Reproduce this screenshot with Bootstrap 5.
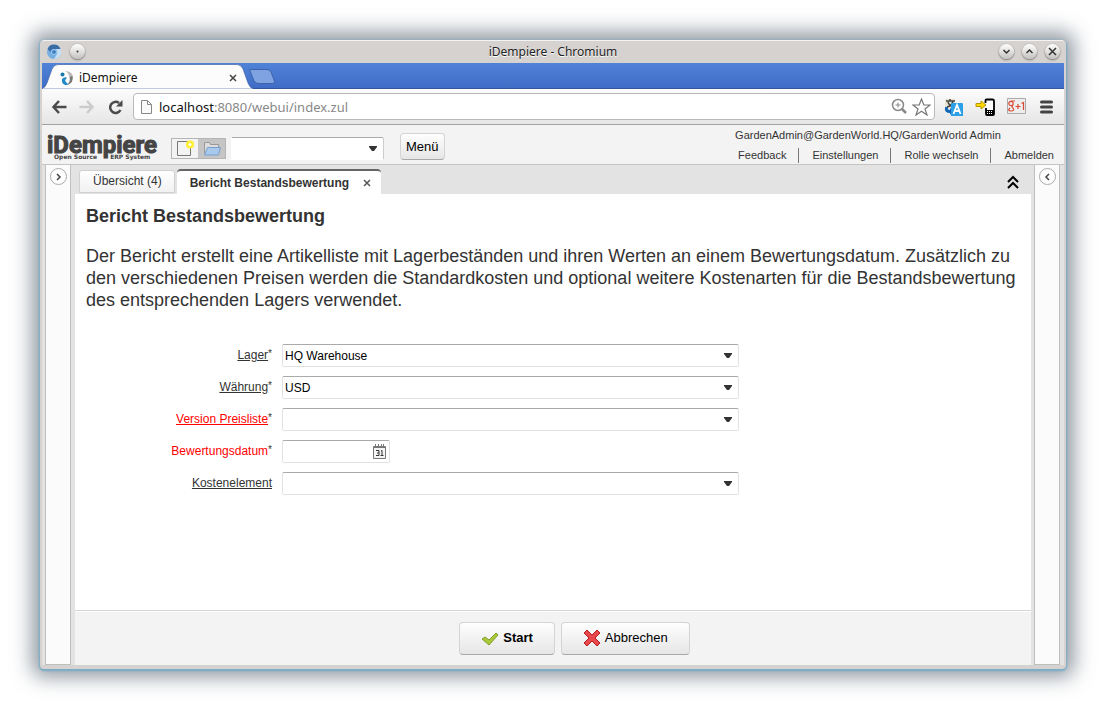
<!DOCTYPE html>
<html lang="de">
<head>
<meta charset="utf-8">
<meta name="viewport" content="width=device-width, initial-scale=1">
<title>iDempiere</title>
<link href="https://cdn.jsdelivr.net/npm/bootstrap@5.3.0/dist/css/bootstrap.min.css" rel="stylesheet">
<style>
body{background:#fff;font-family:"Liberation Sans",Arial,sans-serif;font-size:12px;line-height:16px;color:#333}
button{border:0;background:none;padding:0;color:inherit}
svg{display:block;flex:none}
.desk{min-height:100vh;padding:40px}
.win{background:#d6d2cf;border:solid #d6d2cf;border-width:0 2px 4px;border-radius:4px;
 box-shadow:inset 0 1px #f4f4f4,0 1px 2px 1px #78adc8,0 0 20px 8px rgba(70,85,100,.6)}
.chrome{font-family:"Noto Sans","Open Sans",sans-serif;color:#222}
.titlebar{height:23px;padding:0 4px;display:grid;grid-template-columns:1fr auto 1fr;align-items:center}
.titlebar .caption{font-size:12px;text-shadow:0 1px #fff}
.ball{width:15px;height:15px;border-radius:50%;background:linear-gradient(#fff,#c4c2c0);box-shadow:0 1px 2px #777,0 0 1px #999}
.tabstrip{height:26px;background:linear-gradient(#5083d8,#406cc6);border-bottom:1px solid #34589e}
.btab{width:211px;height:26px;color:#111}
.btab .shape{position:absolute;left:0;top:0}
.btab .inner{position:relative;height:26px;padding:3px 16px 0 18px}
.btab .inner span{padding-left:5px}
.newtab svg{overflow:visible}
.toolbar{height:36px;background:linear-gradient(#fcfcfc,#e6e6e6);border-bottom:1px solid #a3a3a3;padding:0 10px 0 9px}
.omni{height:27px;border:1px solid #b9b9b9;border-radius:4px;background:#fff;padding:0 3px 0 6px;margin:0 9px 0 10px}
.omni .url{font-size:13px;line-height:20px;color:#888;padding-left:6px}
.omni .url b{font-weight:400;color:#111}
.exts{gap:12px}
.apphead{height:40px;background:#f3f3f3;border-bottom:1px solid #c4c4c4;padding:0 10px 0 5px}
.brand{width:124px;color:#444;padding-top:4px}
.brand .name{font:bold 24px/24px Roboto,sans-serif;-webkit-text-stroke:1px #444}
.brand .tagline{font:bold 6px/8px "DejaVu Sans",sans-serif;padding-left:7px;margin-top:-4px;display:flex;gap:13px}
.tools{border:1px solid #b5b5b5;height:21px}
.tools button{width:26px;height:19px;display:flex;align-items:center;justify-content:center}
.tools button+button{width:27px;background:#c5c5c5}
.field{height:23px;width:100%;border:1px solid #e1e1e1;border-top-color:#aaa;border-radius:2px;background:#fff;color:#000;font-size:12px;line-height:16px;padding:2px}
select.field{appearance:none;padding-right:20px;background:#fff url("data:image/svg+xml,%3Csvg xmlns='http://www.w3.org/2000/svg' width='10' height='5'%3E%3Cpath d='M1 0h8v1L6 5H4L1 1z' fill='%23333'/%3E%3C/svg%3E") no-repeat right 5px center}
select.search{width:153px;border-color:#aaa #ccc #fff #fff;margin-left:5px}
.menubtn{height:27px;padding:0 5px}
.zbtn{border:1px solid #d4d4d4;border-bottom-color:#a8a8a8;border-radius:4px;background:linear-gradient(#fefefe,#e6e6e6);color:#000;font-size:13px}
.user{font-size:11px;line-height:16px}
.user nav{margin-top:5px}
.user a{color:#333;text-decoration:none;padding:0 12px 0 13px;border-left:1px solid #777;line-height:15px}
.user a:first-child{border:0;padding-left:3px}
.user a:last-child{padding-right:0}
.appbody{background:#e3e3e3;padding:0 4px 0 3px}
.side{width:26px;flex:none;background:#fbfbfb;border:solid #bfbfbf;border-width:0 1px 1px;padding-top:3px}
.side button{width:17px;height:17px;border:1px solid #aaa;border-radius:50%;display:flex;align-items:center;justify-content:center;background:#fff}
.work{min-width:0;margin:0 3px 0 4px}
.wtabs{height:29px;padding:4px 11px 0 4px;gap:2px}
.wtab{height:23px;border:1px solid #d0d0d0;border-radius:3px 3px 0 0;background:linear-gradient(#fff,#f1f1f1);padding:0 12px 2px 13px;margin-top:1px}
.wtab.on{height:25px;margin-top:0;border:0;border-top:2px solid #666;border-radius:4px 4px 0 0;background:#fff;font-weight:700;padding:0 10px 0 13px}
.wtab.on button{padding-left:14px}
.page{background:#fff;padding:11px 11px 12px}
.page h1{font-size:18px;line-height:22px;font-weight:700;margin:0 0 18px}
.page p{font-size:18px;line-height:22px;margin:0 0 33px}
.fields{display:grid;row-gap:9px}
.frow{display:grid;grid-template-columns:186px minmax(0,457px);column-gap:10px;align-items:center}
.frow label{text-align:right;padding-bottom:1px}
.frow.need label{color:red}
.frow sup{font-size:10px;line-height:0;color:#333;top:-2px}
.date{width:108px}
.date button{position:absolute;right:4px;top:3px}
.actions{height:55px;border-top:1px solid #d5d5d5;box-shadow:inset 0 1px #fff;background:#f3f3f3;padding:0 0 0 43px;gap:6px}
.actions .zbtn{height:33px;padding:0 21px}
</style>
</head>
<body>
<div class="desk d-flex flex-column">
<div class="win d-flex flex-column flex-grow-1">
 <header class="chrome">
  <div class="titlebar">
   <div class="d-flex align-items-center">
    <svg width="16" height="16" viewBox="0 0 16 16"><circle cx="8" cy="8" r="7" fill="#75aee0"/><path d="M1.500 5A7 7 0 0 1 14.500 5H8Q5 5 4.500 8z" fill="#3a6da6"/><path d="M14.500 5A7 7 0 0 1 8 15l3-5q1-3-1-5z" fill="#c5dff5"/><circle cx="8" cy="8" r="2.500" fill="#3f7fc4" stroke="#a5cdf0"/></svg>
    <button class="ball ms-2 d-flex align-items-center justify-content-center" aria-label="Fenstermenü"><svg width="3" height="3"><circle cx="1.500" cy="1.500" r="1" fill="#333"/></svg></button>
   </div>
   <div class="caption">iDempiere - Chromium</div>
   <div class="d-flex justify-content-end gap-2">
    <button class="ball" aria-label="Minimieren"><svg width="15" height="15" fill="none" stroke="#333" stroke-width="1.500"><path d="M4.500 6l3 3 3-3"/></svg></button>
    <button class="ball" aria-label="Maximieren"><svg width="15" height="15" fill="none" stroke="#333" stroke-width="1.500"><path d="M4.500 9l3-3 3 3"/></svg></button>
    <button class="ball" aria-label="Schließen"><svg width="15" height="15" fill="none" stroke="#333" stroke-width="1.500"><path d="M4 4l7 7m0-7l-7 7"/></svg></button>
   </div>
  </div>
  <div class="tabstrip d-flex">
   <div class="btab position-relative">
    <svg class="shape" width="211" height="26" viewBox="0 0 211 26"><path d="M0 25.500Q3 25 5 20L10 6Q12 1.500 16 1.500H195Q199 1.500 201 6L206 20Q208 25 211 25.500V26H0z" fill="#fcfcfc" stroke="#34589e" stroke-opacity=".6"/></svg>
    <div class="inner d-flex align-items-center">
     <svg width="14" height="16" viewBox="0 0 14 16"><circle cx="2.500" cy="4.500" r="2" fill="#1878ae"/><path d="M5 1Q8 2 9.500 7L12 9Q15 2 5 1z" fill="#bbb"/><path d="M12.500 6Q14 13 7 15Q11 11 9.500 7z" fill="#777"/><path d="M2 9q3-3 5-1-3 2-1 4 1 2 3 2Q4 17 2 12z" fill="#2088c5"/></svg>
     <span class="flex-grow-1">iDempiere</span>
     <button aria-label="Tab schließen"><svg width="8" height="8" stroke="#444" stroke-width="1.500"><path d="M1 1l6 6m0-6L1 7"/></svg></button>
    </div>
   </div>
   <button class="newtab" aria-label="Neuer Tab"><svg width="26" height="26"><path d="M-3.500 6.500H14Q17 6.500 18 9L21.500 18Q22 20.500 19.500 20.500H6Q3 20.500 1 18z" fill="#7fa3e0" stroke="#3c63ac"/></svg></button>
  </div>
  <div class="toolbar d-flex align-items-center">
   <button aria-label="Zurück"><svg width="16" height="16" fill="none" stroke="#4a4a4a" stroke-width="2.500"><path d="M8 2L2.500 8 8 14M3 8h12.500"/></svg></button>
   <button class="ms-2 ps-1" aria-label="Vorwärts"><svg width="16" height="16" fill="none" stroke="#ccc" stroke-width="2.500"><path d="M8 2l5.500 6L8 14M13 8H.500"/></svg></button>
   <button class="ms-2 ps-1" aria-label="Neu laden"><svg width="16" height="16" fill="none" stroke="#4a4a4a" stroke-width="2.500"><path d="M13.500 11A5.500 5.500 0 1 1 12 4"/><path d="M15.500 1v6.500H9z" fill="#4a4a4a" stroke="none"/></svg></button>
   <div class="omni d-flex align-items-center flex-grow-1">
    <svg width="13" height="16" fill="#fafafa" stroke="#888"><path d="M1.500 1.500h6l4 4v9h-10zM7.500 1.500v4h4"/></svg>
    <span class="url flex-grow-1"><b>localhost</b>:8080/webui/index.zul</span>
    <button aria-label="Zoom"><svg width="17" height="17" fill="none" stroke="#888" stroke-width="1.500"><circle cx="7" cy="7" r="5.500"/><path d="M11 11l4 4" stroke-width="2.500"/><path d="M4.500 7h5M7 4.500v5" stroke-width="1"/></svg></button>
    <button class="ms-1" aria-label="Lesezeichen"><svg width="19" height="18" fill="#fff" stroke="#777" stroke-width="1.200"><path d="M9.500 1l2.300 6H18l-5 4 2 6-5.500-3.700L4 17l2-6-5-4h6.200z"/></svg></button>
   </div>
   <div class="exts d-flex align-items-center">
    <button aria-label="Übersetzen"><svg width="19" height="18" viewBox="0 0 19 18"><path d="M1 1h10v10H1z" fill="#e7e1cf"/><path d="M2 3h9M6 1v2M3 9Q8 8 9 3M4 4q1 4 6 5" fill="none" stroke="#444" stroke-width="1.500"/><path d="M1 9q-1 6 5 6v2l3-4-3-3v2Q3 12 4 9z" fill="#1266b7"/><path d="M7 5h11q1 0 1 1v12H7z" fill="#2ba0e8"/><path d="M9.500 16L13 7l3.500 9M11 13h4" stroke="#fff" stroke-width="1.800" fill="none"/></svg></button>
    <button aria-label="An Telefon senden"><svg width="20" height="18" viewBox="0 0 20 18"><path d="M10.500 5V2.500q0-1 1-1h6q1.500 0 1.500 1.500v13q0 1-1 1h-6q-1 0-1-1V10" fill="#fff" stroke="#000" stroke-width="1.800"/><path d="M11 12h8v5h-8z"/><path d="M12 13.500h1m1 0h1m1 0h1m-5 2h1m1 0h1m1 0h1" stroke="#fff"/><path d="M1 5.500h5V3l5 4-5 4V8.500H1z" fill="#ffd900" stroke="#b79700"/></svg></button>
    <button aria-label="Google +1"><svg width="20" height="17" viewBox="0 0 20 17"><path d="M.5.5h18v15H.5z" fill="#eee" stroke="#aaa"/><g fill="none" stroke="#d94b35" stroke-width="1.200"><circle cx="4" cy="5.500" r="2.200"/><path d="M4 3h4M6 7q-2 2 0 3 2 3-2 3-4 0-1-3M8.500 8.500h5M11 6v5M14.500 5.500l2-1V12"/></g></svg></button>
    <button aria-label="Menü"><svg width="15" height="14" stroke="#444" stroke-width="3" stroke-linecap="round"><path d="M2.500 2h10M2.500 7h10M2.500 12h10"/></svg></button>
   </div>
  </div>
 </header>
 <div class="apphead d-flex align-items-center">
  <div class="brand"><div class="name">iDempiere</div><div class="tagline"><span>Open Source</span><span>ERP System</span></div></div>
  <div class="tools d-flex mt-2">
   <button aria-label="Neu"><svg width="18" height="17"><path d="M1.500 1.500h13v14h-13z" fill="#f3f3f3" stroke="#777"/><circle cx="14" cy="4.500" r="2.800" fill="#fff" stroke="#ffef32" stroke-width="2.500"/></svg></button>
   <button aria-label="Öffnen"><svg width="20" height="17"><path d="M2.500 13V2.500h5l1 2h8V8" fill="#ddd" stroke="#999"/><path d="M5.500 7.500h13l-2 7.500H2.500z" fill="#a8c8ec" stroke="#789fce"/></svg></button>
  </div>
  <select class="field search mt-2" aria-label="Suche"><option></option></select>
  <button class="zbtn menubtn ms-3 mt-1">Menü</button>
  <div class="user ms-auto">
   <div>GardenAdmin@GardenWorld.HQ/GardenWorld Admin</div>
   <nav class="d-flex"><a href="#">Feedback</a><a href="#">Einstellungen</a><a href="#">Rolle wechseln</a><a href="#">Abmelden</a></nav>
  </div>
 </div>
 <div class="appbody d-flex flex-grow-1">
  <aside class="side d-flex flex-column align-items-center"><button aria-label="Linke Leiste ausklappen"><svg width="7" height="8" fill="none" stroke="#444" stroke-width="1.500"><path d="M2 1l3 3-3 3"/></svg></button></aside>
  <main class="work d-flex flex-column flex-grow-1">
   <div class="wtabs d-flex">
    <button class="wtab">Übersicht (4)</button>
    <div class="wtab on d-flex align-items-center"><span>Bericht Bestandsbewertung</span><button aria-label="Schließen"><svg width="8" height="8" stroke="#555" stroke-width="1.500"><path d="M1 1l6 6m0-6L1 7"/></svg></button></div>
    <button class="ms-auto" aria-label="Kopf einklappen"><svg width="14" height="14" fill="none" stroke="#000" stroke-width="2"><path d="M2 7l5-5 5 5M2 13l5-5 5 5"/></svg></button>
   </div>
   <section class="page flex-grow-1">
    <h1>Bericht Bestandsbewertung</h1>
    <p>Der Bericht erstellt eine Artikelliste mit Lagerbeständen und ihren Werten an einem Bewertungsdatum. Zusätzlich zu den verschiedenen Preisen werden die Standardkosten und optional weitere Kostenarten für die Bestandsbewertung des entsprechenden Lagers verwendet.</p>
    <form class="fields">
     <div class="frow"><label for="lager"><u>Lager</u><sup>*</sup></label><select id="lager" class="field"><option>HQ Warehouse</option></select></div>
     <div class="frow"><label for="waehrung"><u>Währung</u><sup>*</sup></label><select id="waehrung" class="field"><option>USD</option></select></div>
     <div class="frow need"><label for="version"><u>Version Preisliste</u><sup>*</sup></label><select id="version" class="field"><option></option></select></div>
     <div class="frow need"><label for="datum">Bewertungsdatum<sup>*</sup></label><div class="date position-relative"><input id="datum" type="text" class="field d-block"><button type="button" aria-label="Kalender"><svg width="13" height="16" viewBox="0 0 13 16"><path d="M.500 3.500h12v12H.500z" fill="#f5f5f5" stroke="#777"/><path d="M1 3h11v2H1z" fill="#777"/><path d="M2.500 1v3m3-3v3m3-3v3m2-3v3" stroke="#777"/><path d="M3 7.500h3v5H3M4 10h2M8 8l1-.500v5M7.500 12.500h3" stroke="#333" fill="none"/></svg></button></div></div>
     <div class="frow"><label for="kosten"><u>Kostenelement</u></label><select id="kosten" class="field"><option></option></select></div>
    </form>
   </section>
   <footer class="actions d-flex align-items-center justify-content-center">
    <button class="zbtn d-flex align-items-center fw-bold"><svg width="18" height="16"><path d="M1 9l3-2 4 3 7-7 2 2-9 10z" fill="#a9c93a" stroke="#829f2b"/></svg><span class="ms-1">Start</span></button>
    <button class="zbtn d-flex align-items-center"><svg width="18" height="18"><path d="M4 1l5 5 5-5 3 3-5 5 5 5-3 3-5-5-5 5-3-3 5-5-5-5z" fill="#e8474b" stroke="#b91d24"/></svg><span class="ms-1">Abbrechen</span></button>
   </footer>
  </main>
  <aside class="side d-flex flex-column align-items-center"><button aria-label="Rechte Leiste ausklappen"><svg width="7" height="8" fill="none" stroke="#444" stroke-width="1.500"><path d="M5 1L2 4l3 3"/></svg></button></aside>
 </div>
</div>
</div>
<script src="https://cdn.jsdelivr.net/npm/bootstrap@5.3.0/dist/js/bootstrap.bundle.min.js"></script>
</body>
</html>
